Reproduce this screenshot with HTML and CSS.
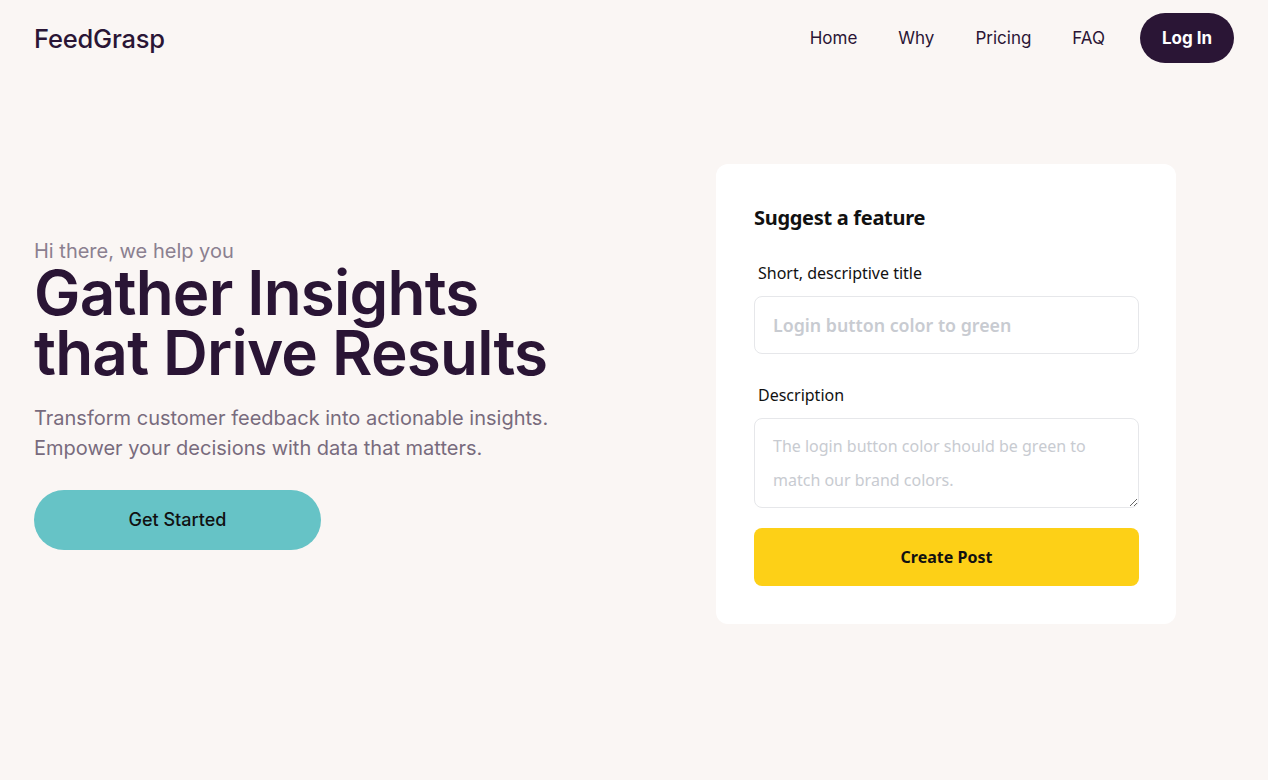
FILE: index.html
```html
<!DOCTYPE html>
<html lang="en">
<head>
<meta charset="utf-8">
<title>FeedGrasp</title>
<link rel="stylesheet" href="styles.css">
</head>
<body>
<header class="topbar">
  <div class="logo">FeedGrasp</div>
  <nav class="nav">
    <a class="nav-link" href="#">Home</a>
    <a class="nav-link" href="#">Why</a>
    <a class="nav-link" href="#">Pricing</a>
    <a class="nav-link nav-last" href="#">FAQ</a>
    <a class="login" href="#">Log In</a>
  </nav>
</header>
<main class="hero">
  <section class="intro">
    <p class="eyebrow">Hi there, we help you</p>
    <h1 class="headline">Gather Insights<br>that Drive Results</h1>
    <p class="lead">Transform customer feedback into actionable insights.<br>Empower your decisions with data that matters.</p>
    <a class="cta" href="#">Get Started</a>
  </section>
  <section class="card">
    <h2 class="card-title">Suggest a feature</h2>
    <label class="field-label">Short, descriptive title</label>
    <input class="field-input" type="text" placeholder="Login button color to green">
    <label class="field-label desc-label">Description</label>
    <textarea class="field-area" placeholder="The login button color should be green to match our brand colors."></textarea>
    <button class="submit" type="button">Create Post</button>
  </section>
</main>
</body>
</html>
```
FILE: styles.css
```css
* { box-sizing: border-box; }
html, body { margin: 0; padding: 0; }
body {
  background: #faf6f4;
  font-family: Inter, "Liberation Sans", sans-serif;
  color: #2a1535;
  width: 1268px;
  height: 780px;
  overflow: hidden;
}
.topbar {
  display: flex;
  align-items: center;
  justify-content: space-between;
  height: 76px;
  padding: 0 34px;
}
.logo {
  font-size: 25.5px;
  font-weight: 500;
  color: #2a1535;
  letter-spacing: -0.2px;
}
.nav {
  display: flex;
  align-items: center;
}
.nav-link {
  font-size: 17px;
  color: #2a1535;
  text-decoration: none;
  margin-right: 41px;
}
.nav-last { margin-right: 35px; }
.login {
  display: flex;
  align-items: center;
  justify-content: center;
  width: 94px;
  height: 50px;
  border-radius: 25px;
  background: #2a1535;
  color: #fff;
  font-size: 17px;
  font-weight: 700;
  text-decoration: none;
}
.hero {
  display: flex;
  align-items: center;
  justify-content: space-between;
  height: 636px;
  padding: 0 92px 0 34px;
}
.intro {
  display: flex;
  flex-direction: column;
  align-items: flex-start;
}
.eyebrow {
  margin: 0;
  font-size: 20px;
  color: #8b8090;
  line-height: 24px;
}
.headline {
  margin: 0;
  font-size: 62px;
  font-weight: 600;
  line-height: 60px;
  letter-spacing: -0.8px;
  color: #2a1535;
}
.lead {
  margin: 20px 0 0;
  font-size: 20px;
  line-height: 30px;
  color: #786b7d;
}
.cta {
  margin-top: 27px;
  display: flex;
  align-items: center;
  justify-content: center;
  width: 287px;
  height: 60px;
  border-radius: 30px;
  background: #66c3c6;
  color: #111;
  font-size: 18px;
  font-weight: 500;
  text-decoration: none;
}
.card {
  width: 460px;
  height: 460px;
  background: #fff;
  border-radius: 12px;
  padding: 38px 37px 37px 38px;
  display: flex;
  flex-direction: column;
  font-family: "Noto Sans", "Open Sans", sans-serif;
}
.card-title {
  margin: 0;
  font-size: 20px;
  font-weight: 700;
  color: #111;
  line-height: 32px;
  letter-spacing: -0.3px;
}
.field-label {
  margin: 28px 0 0 4px;
  font-size: 16px;
  color: #111;
  line-height: 22px;
}
.desc-label { margin-top: 30px; }
.field-input {
  margin-top: 12px;
  height: 58px;
  width: 100%;
  border: 1px solid #e6e7ea;
  border-radius: 8px;
  padding: 0 18px;
  font-family: inherit;
  font-size: 17.8px;
  font-weight: 600;
  outline: none;
  background: #fff;
}
.field-input::placeholder { color: #c8cbd1; }
.field-area {
  margin-top: 12px;
  height: 90px;
  width: 100%;
  border: 1px solid #e6e7ea;
  border-radius: 8px;
  padding: 10px 18px;
  font-family: inherit;
  font-size: 16px;
  line-height: 34px;
  resize: vertical;
  outline: none;
  background: #fff;
}
.field-area::placeholder { color: #c8cbd1; }
.submit {
  margin-top: 20px;
  height: 58px;
  width: 100%;
  border: none;
  border-radius: 8px;
  background: #fdd017;
  color: #111;
  font-family: inherit;
  font-size: 16px;
  font-weight: 700;
}
```
